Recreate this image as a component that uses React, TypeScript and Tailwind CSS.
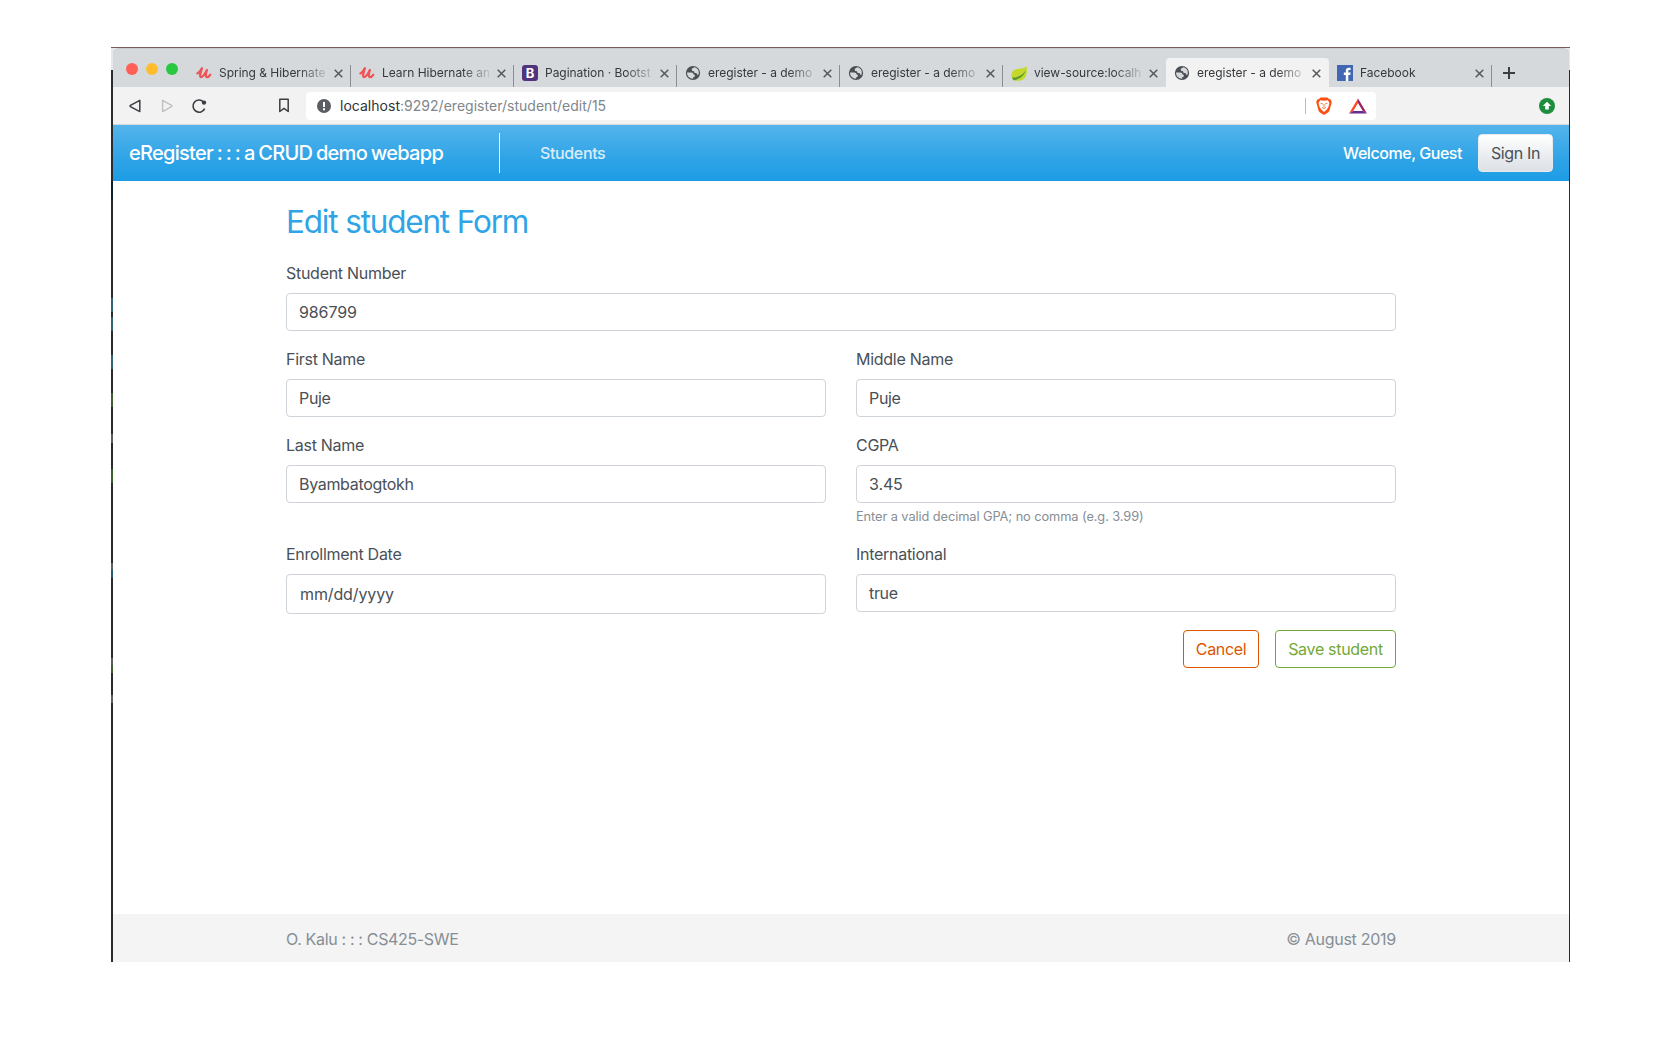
import React from "react";

type TabInfo = { icon: React.ReactNode; title: string; active?: boolean; plainRight?: boolean };

const Udemy = () => (
  <svg className="h-4 w-4" viewBox="0 0 16 16" fill="none" stroke="#ef5457" strokeWidth="2.3" strokeLinecap="round" strokeLinejoin="round">
    <path d="M1.400 8.400C3 7.400 4.900 5.200 5.900 3.200C5.200 5.800 2.900 11.700 4.900 12.100C7.100 12.500 9.300 8.200 10.900 5C10.200 7.500 9 11.800 10.700 12.100C12.100 12.300 13.400 11 14.200 9.800" />
  </svg>
);

const Bootstrap = () => (
  <span className="flex h-4 w-4 items-center justify-center rounded-[3px] bg-[#51347b] text-[13px] font-bold leading-none text-white">B</span>
);

const Globe = () => (
  <svg className="h-4 w-4" viewBox="0 0 16 16">
    <circle cx="8" cy="8" r="7.1" fill="#4b4f54" />
    <path d="M2 7.600L6.200 7.500Q8.600 7.700 8.500 9.300L9.800 9.900V11.400L8.300 12.200L8.100 13.800C4.600 13.700 2 11.100 2 7.600Z" fill="#d5d9dc" />
    <path d="M9.200 2.300L6.600 4.100L7.200 5.900L9 6.200L9.600 8L11.600 8L12 9.700L13.600 9.500C14.600 5.500 12.300 2.700 9.200 2.300Z" fill="#d5d9dc" />
  </svg>
);

const Leaf = () => (
  <svg className="h-4 w-4" viewBox="0 0 16 16">
    <path d="M15.300.5C14 3.300 11.500 3.500 7.500 3.800C2.500 4.300.2 7.200.5 10.500C.7 12.500 1.400 14.200 2.500 15.200C7 16.400 13.500 15.500 15.200 10.200C16.200 7 15.900 3 15.300.5Z" fill="#c5d92d" />
    <path d="M.8 12.600C5.500 12.600 11.500 11.200 14.500 5.600C13.200 12.100 7.800 14.700 2.500 15.200Z" fill="#5d9b35" />
    <path d="M4.500 14.900C9 13.900 12.800 11.500 14.500 6.500L15.200 10.200C13.500 15.300 8.500 16.200 4.500 14.900Z" fill="#c5d92d" />
  </svg>
);

const Facebook = () => (
  <svg className="h-4 w-4" viewBox="0 0 16 16">
    <rect width="16" height="16" fill="#4267b2" />
    <path d="M8.800 16V10H6.800V7.600H8.800V5.900C8.800 3.900 10 2.800 11.900 2.800H13.600V5H12.500C11.500 5 11.300 5.500 11.300 6.200V7.600H13.600L13.300 10H11.300V16Z" fill="#fff" />
  </svg>
);

const tabs: TabInfo[] = [
  { icon: <Udemy />, title: "Spring & Hibernate" },
  { icon: <Udemy />, title: "Learn Hibernate an" },
  { icon: <Bootstrap />, title: "Pagination · Bootst" },
  { icon: <Globe />, title: "eregister - a demo" },
  { icon: <Globe />, title: "eregister - a demo" },
  { icon: <Leaf />, title: "view-source:localh", plainRight: true },
  { icon: <Globe />, title: "eregister - a demo", active: true, plainRight: true },
  { icon: <Facebook />, title: "Facebook" },
];

const Tab = ({ icon, title, active, plainRight }: TabInfo) => (
  <div className={`flex h-[29px] w-[163px] shrink-0 items-end ${active ? "rounded-t-[4px] bg-[#f2f2f2]" : ""}`}>
    <div className={`flex h-[22px] w-full items-start border-r ${plainRight ? "border-transparent" : "border-[#8b8e91]"}`}>
      <span className="ml-[8px] h-4 w-4 shrink-0">{icon}</span>
      <span className="ml-[7px] w-[107px] whitespace-nowrap text-[12px] leading-4 tracking-[-0.03px] text-[#35383c] [mask-image:linear-gradient(to_right,#000_80px,transparent_112px)]">
        {title}
      </span>
      <svg className="ml-[8px] mt-[4px] h-[9px] w-[9px] shrink-0" viewBox="0 0 9 9" stroke="#55585c" strokeWidth="1.5">
        <path d="M.7.7L8.300 8.300M8.300.7L.7 8.300" />
      </svg>
    </div>
  </div>
);

const Field = ({ label, value, help, date }: { label: string; value: string; help?: string; date?: boolean }) => (
  <div className="mb-4">
    <label className="mb-2 block leading-6 tracking-[-0.28px]">{label}</label>
    <div className={`flex items-center rounded-[4px] border border-[#ced4da] bg-white ${date ? "h-10 px-[13px]" : "h-[38px] px-3"}`}>
      <span className={date || /\d/.test(value) ? "tracking-[-0.12px]" : "tracking-[-0.32px]"}>{value}</span>
    </div>
    {help && <small className="mt-1 block h-[19px] text-[12.8px] leading-[19px] tracking-[-0.08px] text-[#868e96]">{help}</small>}
  </div>
);

const Toolbar = () => (
  <div className="flex h-[38px] shrink-0 items-center border-b border-[#d3d7da] bg-[#f2f2f2]">
    <svg className="ml-[16px] h-[14px] w-[13px]" viewBox="0 0 13 14" fill="none" stroke="#3b3e42" strokeWidth="1.500" strokeLinejoin="round">
      <path d="M10.800 1.400V12.600L1.400 7.600Q.8 7 1.400 6.400Z" />
    </svg>
    <svg className="ml-[19px] h-[14px] w-[13px]" viewBox="0 0 13 14" fill="none" stroke="#bfc1c3" strokeWidth="1.500" strokeLinejoin="round">
      <path d="M1.600 1.400V12.600L10.600 7.600Q11.200 7 10.600 6.400Z" />
    </svg>
    <svg className="ml-[17px] h-[16px] w-[16px]" viewBox="0 0 16 16" fill="none" stroke="#3b3e42" strokeWidth="1.600">
      <path d="M13.700 10.600A6.100 6.100 0 1 1 12.400 3.700" />
      <circle cx="13" cy="4.600" r="2.200" fill="#3b3e42" stroke="none" />
    </svg>
    <svg className="ml-[71px] h-[15px] w-[12px]" viewBox="0 0 12 15" fill="none" stroke="#3b3e42" strokeWidth="1.500" strokeLinejoin="round">
      <path d="M1.800 1.200H10.200V13.500L6 10.300L1.800 13.500Z" />
    </svg>
    <div className="ml-[16px] flex h-7 w-[1070px] items-center rounded-[4px] bg-white">
      <svg className="ml-[11px] h-[14px] w-[14px]" viewBox="0 0 14 14">
        <circle cx="7" cy="7" r="7" fill="#5a5e63" />
        <path d="M6 3H8V8H6ZM6 9.300H8V11.200H6Z" fill="#fff" />
      </svg>
      <span className="ml-[9px] text-[14px] leading-5 tracking-[0.02px] text-[#80868b]">
        <span className="text-[#303338]">localhost</span>:9292/eregister/student/edit/15
      </span>
      <span className="ml-auto mr-[10px] h-4 w-px bg-[#b9bbbd]" />
      <svg className="h-[18px] w-4" viewBox="0 0 16 18">
        <path d="M4.500.4H11.500L13 2L14.700 2.400L15.800 5L15.200 7.200L13.500 13.600L12.400 15.200L8 18L3.600 15.200L2.500 13.600L.8 7.200L.2 5L1.300 2.400L3 2Z" fill="#fb4f14" />
        <path d="M4.200 3.300L8 3.700L11.800 3.300L13.400 5.800L12.600 9.400L11 12.200L8 15L5 12.200L3.400 9.400L2.600 5.800Z" fill="#fff" />
        <path d="M4.600 6.200L6.800 7M11.400 6.200L9.200 7M8 7V10M6 10.400L8 11.600L10 10.400" fill="none" stroke="#fb4f14" strokeWidth=".8" />
      </svg>
      <svg className="ml-[17px] mr-[9px] h-4 w-[18px]" viewBox="0 0 18 16">
        <path d="M9 .5L0 15.500L4.200 13L9 5Z" fill="#ff4724" />
        <path d="M9 .5L18 15.500L13.800 13L9 5Z" fill="#9e1f63" />
        <path d="M0 15.500H18L13.800 13H4.200Z" fill="#662d91" />
      </svg>
    </div>
    <svg className="ml-auto mr-[14px] h-4 w-4" viewBox="0 0 16 16">
      <circle cx="8" cy="8" r="8" fill="#1e8e3e" />
      <path d="M8 3.800L12.200 8H9.800V11.500H6.200V8H3.800Z" fill="#fff" />
    </svg>
  </div>
);

// Heights and colours of the slices of the window behind, seen along the left edge.
const edge: [number, string][] = [
  [22, "#e6e7e8"],
  [111, "#292b2e"],
  [19, "#0d1f2d"],
  [98, "#2a2a2a"],
  [14, "#2f6577"],
  [5, "#2a2a2a"],
  [14, "#2f6577"],
  [24, "#2a2a2a"],
  [14, "#2f6577"],
  [24, "#2a2a2a"],
  [14, "#3c6229"],
  [27, "#2a2a2a"],
  [9, "#5c5f62"],
  [26, "#2a2a2a"],
  [14, "#3c6229"],
  [80, "#2a2a2a"],
  [7, "#5c5f62"],
  [8, "#1f5c78"],
  [80, "#2a2a2a"],
  [7, "#5c5f62"],
  [8, "#3c6229"],
  [22, "#2a2a2a"],
  [8, "#5c5f62"],
  [259, "#2a2a2a"],
];

export default function App() {
  return (
    <div className="h-[1050px] w-[1680px] overflow-hidden bg-white pl-[111px] pt-[47px] font-['Inter',sans-serif] text-base text-[#495057]">
      <div className="flex h-[915px] w-[1459px] border-t border-[#7d5a5c] bg-[linear-gradient(#e6e7e8_22px,#292b2e_22px)] pr-px">
        <div className="flex w-[2px] shrink-0 flex-col">
          {edge.map(([height, backgroundColor], i) => (
            <span key={i} className="block shrink-0" style={{ height, backgroundColor }} />
          ))}
        </div>
        <div className="flex min-w-0 flex-1 flex-col">
          <div className="bg-[#e6e7e8]">
            <div className="flex h-[39px] items-end rounded-t-[6px] border-t border-[#c9cbcd] bg-[#d5d9dc]">
              <div className="mb-[12px] ml-[13px] flex w-[62px] gap-2">
                <span className="h-3 w-3 rounded-full bg-[#ff5f57]" />
                <span className="h-3 w-3 rounded-full bg-[#ffbd2e]" />
                <span className="h-3 w-3 rounded-full bg-[#28c940]" />
              </div>
              {tabs.map((t, i) => (
                <Tab key={i} {...t} />
              ))}
              <svg className="mb-[8px] ml-[11px] h-3 w-3" viewBox="0 0 12 12" stroke="#3b3e42" strokeWidth="2">
                <path d="M6 0V12M0 6H12" />
              </svg>
            </div>
          </div>
          <Toolbar />
          <header className="flex h-14 shrink-0 items-center bg-[linear-gradient(#54b4eb,#2fa4e7_60%,#1d9ce5)] px-4 text-white">
            <span className="w-[370px] text-[20px] font-medium tracking-[-0.72px] [word-spacing:-0.9px]">eRegister : : : a CRUD demo webapp</span>
            <span className="h-10 w-px bg-white" />
            <span className="ml-10 font-medium tracking-[-0.36px] text-white/80">Students</span>
            <span className="ml-auto font-medium tracking-[-0.45px]">Welcome, Guest</span>
            <button className="ml-4 h-[38px] w-[75px] rounded-[4px] border border-[#e9ecef] bg-[linear-gradient(#fff,#e9ecef_60%,#dde1e5)] tracking-[-0.35px] text-[#495057]">
              Sign In
            </button>
          </header>
          <main className="min-h-0 flex-1 bg-white px-[173px] pt-[22px]">
            <h1 className="mb-[20px] h-[38px] text-[31.5px] leading-[38px] tracking-[-1.2px] text-[#2fa4e7] [word-spacing:0.2px]">Edit student Form</h1>
            <Field label="Student Number" value="986799" />
            <div className="grid grid-cols-2 gap-x-[30px]">
              <Field label="First Name" value="Puje" />
              <Field label="Middle Name" value="Puje" />
              <Field label="Last Name" value="Byambatogtokh" />
              <Field label="CGPA" value="3.45" help="Enter a valid decimal GPA; no comma (e.g. 3.99)" />
              <Field label="Enrollment Date" value="mm/dd/yyyy" date />
              <Field label="International" value="true" />
            </div>
            <div className="flex justify-end gap-4">
              <button className="h-[38px] w-[76px] rounded-[4px] border border-[#dd5600] tracking-[-0.36px] text-[#dd5600]">Cancel</button>
              <button className="h-[38px] w-[121px] rounded-[4px] border border-[#73a839] tracking-[-0.32px] text-[#73a839]">Save student</button>
            </div>
          </main>
          <footer className="flex h-12 shrink-0 items-center justify-between bg-[#f4f4f4] px-[173px] pt-[2px] text-[#868e96]">
            <span className="tracking-[-0.34px]">O. Kalu : : : CS425-SWE</span>
            <span className="tracking-[-0.27px]">© August 2019</span>
          </footer>
        </div>
      </div>
    </div>
  );
}
